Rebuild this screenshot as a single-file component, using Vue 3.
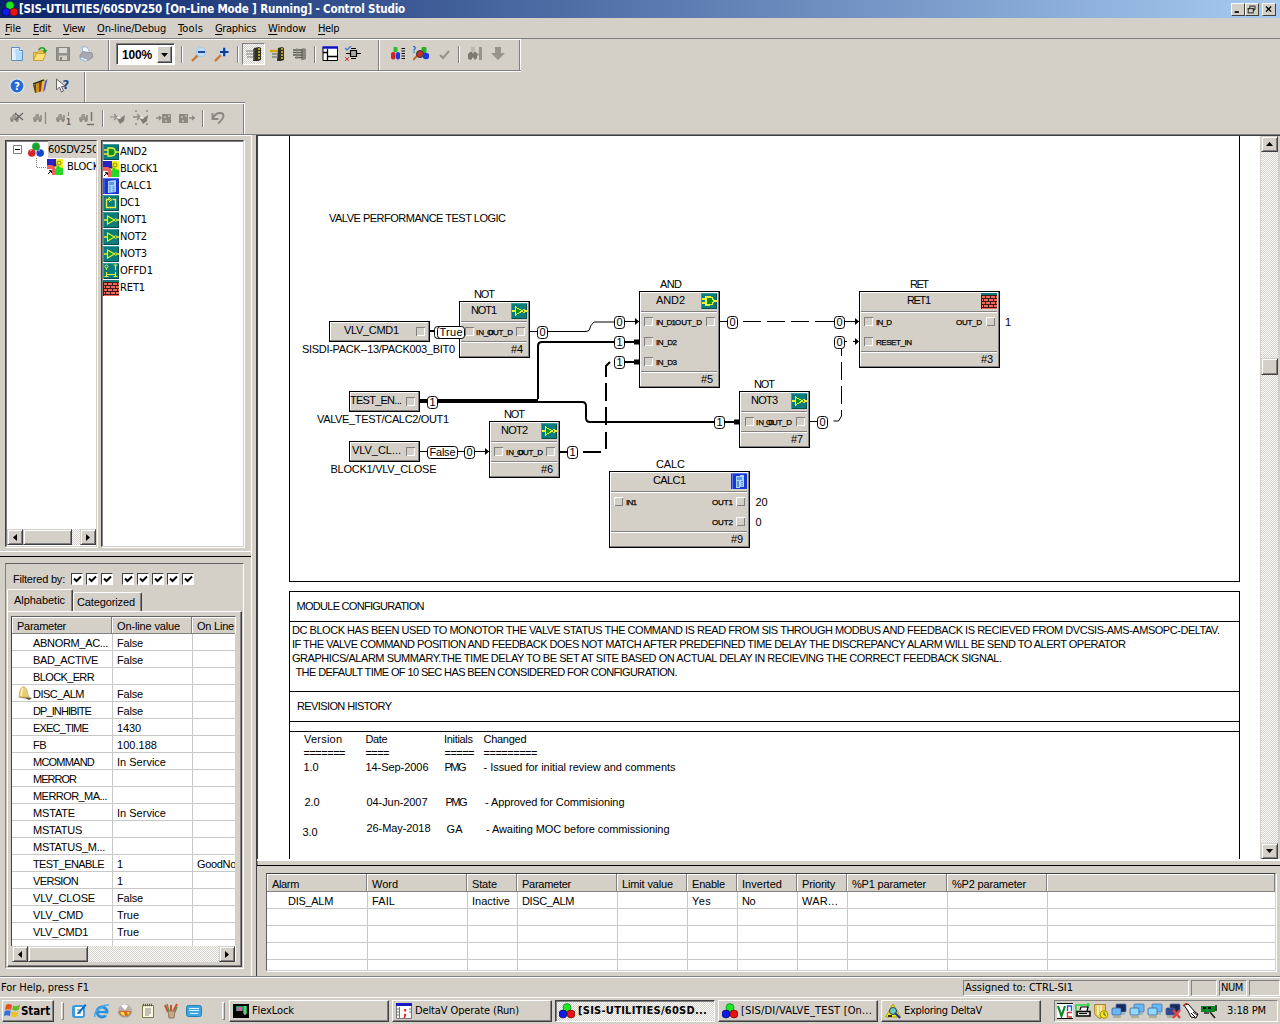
<script setup>
import { h } from 'vue'

// Spreads the letters of an element so that it takes the given width.
const vFit = {
  mounted(el, { value }) {
    const n = el.textContent.length
    const w = el.getBoundingClientRect().width
    if (value && n) el.style.letterSpacing = (value - w) / n + 'px'
  }
}

const rgb = '<circle cx="8" cy="4.6" r="4" fill="#1ee81e" stroke="#063" stroke-width=".6"/><circle cx="4" cy="11" r="4" fill="#0a1af0" stroke="#003" stroke-width=".6"/><circle cx="12" cy="11" r="4" fill="#ee1010" stroke="#500" stroke-width=".6"/>'
const teal = '<rect width="16" height="16" fill="#087c7c"/><path d="M0 15.5H16M15.5 0V16" stroke="#045050"/><path d="M0 .5H16M.5 0V16" stroke="#3a9c9c"/>'
const loco = '<path d="M1 9V7.500l2-1L4 4h3v2.500h1V5h2v5H1z" fill="#9c9892"/><circle cx="3" cy="10.500" r="1.500" fill="#8c8882"/><circle cx="8" cy="10.500" r="1.500" fill="#8c8882"/>'
const mon = (a, b) => `<rect x="5" y="1" width="10" height="8" rx="1" fill="${a}" stroke="#4a6fa8" stroke-width=".8"/><path d="M8 10h6v2H8z" fill="#9bb"/><rect x="1" y="5" width="9" height="7" rx="1" fill="${b}" stroke="#3a5f98" stroke-width=".8"/><path d="M2 13h8v2H2z" fill="#b0b098"/>`
const icons = {
  rgb,
  module: '<circle cx="8" cy="4.5" r="4" fill="#2db83d"/><path d="M5 3l3-2 3 2v4l-3 1-3-1z" fill="#16a030"/><circle cx="3.8" cy="11" r="3.8" fill="#d02828"/><circle cx="12.2" cy="11" r="3.8" fill="#1848c8"/><path d="M2 9l2-1M10 9l2-1" stroke="#fff" stroke-opacity=".6"/>',
  and: teal + '<path d="M5 4h3.5c5 0 5 8 0 8H5zM1 6h4M1 10h4M12 8h4" fill="#0a9020" stroke="#e8f040" stroke-width="1.3"/>',
  not: teal + '<path d="M4.5 4v8l7-4z" fill="#0a9020" stroke="#e8f040" stroke-width="1.1"/><path d="M1 8h3.5M14 8h2" stroke="#e8f040" stroke-width="1.3"/><circle cx="12.7" cy="8" r="1.3" fill="#087c7c" stroke="#e8f040" stroke-width=".9"/>',
  block: '<rect width="16" height="16" fill="#f5ee20"/><path d="M0 0h9v5l-2 2H0z" fill="#2a20c8"/><path d="M0 6h5l3 2v8H0z" fill="#f06060"/><path d="M8 10l3-2 5 1v7H8z" fill="#28d828"/><circle cx="12" cy="4" r="2" fill="#e8f010" stroke="#7a7a10" stroke-width=".8"/><circle cx="8" cy="6" r="1.6" fill="#302080"/><circle cx="11" cy="8" r="1.6" fill="#28d828"/><path d="M0 10h5v6H0z" fill="#fff"/><path d="M1 15l3-3M2 11.7h2.5V14" stroke="#000" fill="none"/>',
  calc: '<rect width="16" height="16" fill="#1c34d0"/><path d="M0 .5h16M1 0v16" stroke="#5878f0"/><path d="M5 3l8-1v12l-8 1z" fill="#a8d4f8"/><path d="M6 4.3l5-.5v3l-5 .5z" fill="#5898e8"/><path d="M6 9h2M9.5 8.8h2M6 11h2M9.5 10.8h2M6 13h2M9.5 12.8h2" stroke="#5888e0" stroke-width="1.2"/>',
  dc: teal + '<path d="M6 4.500H3.500v8h9v-8H9.500" fill="none" stroke="#e8f040" stroke-width="1.3"/><path d="M6 2v2.500l2.500 1M6 7l2.500-2.500L6 2" fill="none" stroke="#e8f040"/>',
  offd: teal + '<circle cx="3.500" cy="3.500" r="1.500" fill="none" stroke="#e8f040"/><path d="M3.500 5v2M10.500 2h4M12.500 2v5M3.500 9v5M12.500 9v5M3.500 11.500h9M1.500 13.500h4M10.500 13.500h4" fill="none" stroke="#e8f040" stroke-width="1.1"/>',
  ret: '<rect width="16" height="16" fill="#ee6a5c"/><path d="M0 1h16" stroke="#087c7c" stroke-width="2.400"/><path d="M0 5.500h16M0 8.500h16M0 11.500h16M0 14.500h16M4.500 3v3M9.500 3v3M14.500 3v3M2.500 6v3M7.500 6v3M12.500 6v3M4.500 9v3M9.500 9v3M14.500 9v3M2.500 12v3M7.500 12v3M12.500 12v3M.5 2v14" stroke="#401818" stroke-width="1" shape-rendering="crispEdges"/><path d="M0 2.500h16" stroke="#401818"/>',
  new: '<path d="M2.500 1.500h8l3 3v10h-11z" fill="#dff0ff" stroke="#5a8fc8"/><path d="M6 3h4v3h3v8H7z" fill="#b4dcfa"/><path d="M10.500 1.500v3h3" fill="#fff" stroke="#5a8fc8"/>',
  open: '<path d="M1.500 14.500V6.500h4l1-1.500h5v3" fill="#f0c848" stroke="#c89c38"/><path d="M1.500 14.500l3-7h9.500l-3 7z" fill="#fae078" stroke="#c8a038"/><path d="M7 4c1-3 5-3 6 0" fill="none" stroke="#28a028" stroke-width="1.700"/><path d="M10.500 4h5L13 7.500z" fill="#28a028"/>',
  save: '<path d="M1.500 1.500h13v13h-13z" fill="#94928c" stroke="#86847e"/><path d="M4 2h8v5H4z" fill="#dcdad4"/><path d="M4 9.500h8V14H4z" fill="#d4d0c8"/><path d="M5 11h2v3H5z" fill="#86847e"/>',
  print: '<path d="M5 7L4 1l5 0 3 6z" fill="#f4faff" stroke="#9ab8d8"/><path d="M2 9l3-3.500 9 1.500 1 4-5 3.500-8-2.500z" fill="#a8aab0" stroke="#888a90" stroke-width=".8"/><path d="M3 11l7 2.500-2 2-6-2.500z" fill="#dcecfa" stroke="#8ac" stroke-width=".8"/>',
  zout: '<path d="M1 15l6-6" stroke="#c87838" stroke-width="2.400"/><circle cx="10" cy="6" r="4.800" fill="#b8dcfa" stroke="#a8c8e8"/><path d="M7 6h7" stroke="#103890" stroke-width="1.800"/>',
  zin: '<path d="M1 15l6-6" stroke="#c87838" stroke-width="2.400"/><circle cx="10.200" cy="6" r="4.500" fill="#b8dcfa"/><path d="M6 6h8.500M10.200 1.800v8.500" stroke="#103890" stroke-width="2.200"/>',
  bk1: '<path d="M8 2l5-1 2 1v12l-3 1H7z" fill="#303028"/><path d="M13 2v12" stroke="#e0c818" stroke-width="1.500" stroke-dasharray="2 1"/><path d="M0 5h8M0 8h8M1 11h7" stroke="#a0a098" stroke-width="1.500"/><path d="M7 3h1.500v11H7z" fill="#606058"/>',
  bk2: '<path d="M9 2l4-1 2 1v12l-3 1H8z" fill="#303028"/><path d="M13 2v12" stroke="#e0c818" stroke-width="1.500" stroke-dasharray="2 1"/><path d="M1 5h8" stroke="#d0a810" stroke-width="2.500"/><path d="M3 8h6M3 11h6" stroke="#808078" stroke-width="1.400"/>',
  bk3: '<path d="M9 3l3-1 2 1v10l-2 1H9z" fill="#888880"/><path d="M1 4h10M1 6.500h10M1 9h10M3 11.500h8" stroke="#606058" stroke-width="1.300"/><path d="M5 2v11" stroke="#888880"/>',
  layout: '<path d="M1 1.500h14.500v13H1z" fill="#fff" stroke="#000"/><path d="M.5 1.500H16" stroke="#1010c8" stroke-width="2.500"/><path d="M5.500 3v11.500M5.500 10.500H15M1 6.500h4.500" stroke="#000" stroke-width="1.300"/>',
  pins: '<path d="M0 2l2 2 4-4" fill="none" stroke="#2878d0" stroke-width="1.200"/><path d="M0 11l4 4m0-4l-4 4" stroke="#d83028"/><path d="M5.500 4.500h6v6h-6z" fill="#aaa8a0" stroke="#000" stroke-width="1.200"/><path d="M1 7.500h4.500M11.500 7.500H16M6 2.500h5M6 12.500h5" stroke="#000" stroke-width="1.200"/>',
  list: '<rect x="3.500" y="1" width="4" height="5" rx="1" fill="#28c028"/><rect x="1" y="6" width="4.500" height="7.500" rx="2" fill="#d82020"/><rect x="6" y="6" width="4" height="7.500" rx="2" fill="#1838d8"/><path d="M11.500 2.500H15M11.500 5H15M11.500 7.500H15M11.500 10H15M11.500 12.500H15" stroke="#000" stroke-width="1.200"/>',
  search: '<text x="-1" y="7" font-size="8" font-weight="bold" fill="#2878d0">?</text><path d="M0 14l5-5" stroke="#c07020" stroke-width="2"/><rect x="8.500" y="1" width="5" height="6" rx="1" fill="#28b028"/><circle cx="7" cy="8" r="3.500" fill="#c83030" stroke="#333"/><circle cx="13" cy="10" r="3.300" fill="#1838d8"/>',
  check: '<path d="M4 9l3 3 6-7" fill="none" stroke="#98948c" stroke-width="2"/>',
  loc: '<rect x="4" y="1" width="4" height="5" fill="#bbb7b0"/><path d="M1 8l2-2h2l1 2 1-2h2l1 2v4l-2 2-2-3-2 3-3-1z" fill="#7c7872"/><path d="M10 7l2 1V1h3v13h-3V9l-2 1z" fill="#98948c"/>',
  down: '<path d="M5 1h6v6h4l-7 7-7-7h4z" fill="#98948c"/>',
  help: '<circle cx="8" cy="8" r="7" fill="#2868d0" stroke="#d8ecff" stroke-width="1.200"/><text x="8" y="12" font-size="11" font-weight="bold" fill="#fff" text-anchor="middle">?</text>',
  books: '<path d="M1 7l3-1 2 8-3 1z" fill="#604818"/><path d="M4 5l3-1v10l-3 1z" fill="#c89018"/><path d="M7 4l3-2v11l-3 1z" fill="#983818"/><path d="M10 3l3-2-1 12-3 1z" fill="#e8c838"/><path d="M13 3l2.500-2L13 12l-2 2z" fill="#5858c8"/><path d="M1 6l11-4" stroke="#30381c" stroke-width="1.500"/>',
  whats: '<path d="M1.500 1v11l3-3 2 5 2-1-2-4.500h4z" fill="#f4f4f4" stroke="#666"/><text x="7.500" y="11" font-size="13" font-weight="bold" fill="#184890">?</text>',
  d1: loco + '<path d="M6 3l8 7m0-7l-8 7" stroke="#666" stroke-width="1.200"/>',
  d2: loco + '<path d="M13.500 2v12" stroke="#8c8882" stroke-width="1.300"/>',
  d3: loco + '<path d="M13.500 2v4" stroke="#8c8882"/><text x="11" y="15" font-size="8" font-weight="bold" fill="#666">1</text>',
  d4: loco + '<path d="M13.500 2v9M9 14.500h7" stroke="#77736d" stroke-width="1.500"/>',
  h1: '<path d="M0 7h6M4 4l3 3-3 3" stroke="#8c8882" fill="none" stroke-width="1.200"/><path d="M6 7l3 2 6-4-1 6-4 3z" fill="#807c76"/><path d="M6 8l3-2 2 3z" fill="#eee"/>',
  h2: '<path d="M0 7h6M2 1h2M13 1h2M2 14h2M13 14h2M4 4l3 3-3 3" stroke="#8c8882" fill="none" stroke-width="1.300"/><path d="M6 7l3 2 6-4-1 6-4 3z" fill="#807c76"/><path d="M6 8l3-2 2 3z" fill="#eee"/>',
  h3: '<path d="M0 8h5M3 6l2 2-2 2" stroke="#8c8882" fill="none" stroke-width="1.300"/><path d="M6 4h9v9H6z" fill="#8c8882"/><path d="M8 7h2M12 6h2M9 11h2" stroke="#c4c0b8" stroke-width="1.400"/>',
  h4: '<path d="M10 8h6M13 6l2 2-2 2" stroke="#8c8882" fill="none" stroke-width="1.300"/><path d="M0 4h9v9H0z" fill="#8c8882"/><path d="M2 7h2M6 6h2M3 11h2" stroke="#c4c0b8" stroke-width="1.400"/>',
  undo: '<path d="M2.500 3v6h6M3 8.500C6 1.500 13 2 13.500 5.500c0 3-2 5-5.500 8" fill="none" stroke="#8c8882" stroke-width="1.900"/>',
  flag: '<path d="M2 2c2-1.500 4-1 6 0L7 7C5 6 3 6 1 7z" fill="#e85020"/><path d="M9 2.500c2 1 4 1 7-1l-1 5c-3 2-5 1-7 0z" fill="#68b830"/><path d="M.8 8c2-1 4-1 6 0l-1 5c-2-1-4-1-6 0z" fill="#3870d8"/><path d="M8 8.500c2 1 4 1 6.500-.5l-1 5c-2 1.500-4 1.500-6.500.5z" fill="#f0c020"/>',
  desk: '<rect x="1" y="2" width="13" height="13" rx="3" fill="#3c9be0"/><path d="M4 4h8v9H4z" fill="#fff"/><path d="M6 7h4M6 10h4" stroke="#3c80c0"/><path d="M7 9l7-8 1.500 1.500-7 8-2 .5z" fill="#1868b8"/>',
  ie: '<circle cx="8" cy="9" r="5" fill="none" stroke="#2890e0" stroke-width="3"/><path d="M4 9h9" stroke="#2890e0" stroke-width="2.200"/><path d="M11 10.500h5v2h-5z" fill="#d4d0c8"/><path d="M1 14C-1 10 8 1 15 2" fill="none" stroke="#4aa8e8" stroke-width="1.500"/>',
  ball: '<circle cx="8" cy="8" r="7" fill="#b8b0a8"/><path d="M2 8h12c0 8-12 8-12 0z" fill="#d86818"/><path d="M4 3c2-2 5-2 7 0l-3 4z" fill="#fff"/><path d="M3 9h4l1 4-3-1zM10 9h3l-2 3z" fill="#fae060"/><path d="M1 9c2 6 12 6 14 0" fill="none" stroke="#a0a0a0" stroke-width="1"/>',
  pad: '<path d="M2.500 2.500h11v12h-11z" fill="#fcf8e0" stroke="#807850"/><path d="M3 2h10" stroke="#555" stroke-width="2.500" stroke-dasharray="1 1"/><path d="M5 6h6M5 8h6M5 10h6M5 12h4" stroke="#888"/>',
  pens: '<path d="M5 9L2 2M8 9V2M10 9l4-8" stroke="#d84830" stroke-width="2"/><path d="M6 8L4 1M12 9l2-5" stroke="#48a048" stroke-width="1.500"/><path d="M5 8h7l-1 7H6z" fill="#c8a888" stroke="#907858"/>',
  kbd: '<rect x=".5" y="2.500" width="15" height="11" rx="2" fill="#40a4e0" stroke="#2480b8"/><path d="M3 5.500h10M3 7.500h10M4 10.500h8" stroke="#e0f4ff"/>',
  flex: '<path d="M0 1h16v14H0z" fill="#000"/><path d="M3 3h11v8H3z" fill="#18a048"/><path d="M4 4h5v4H4z" fill="#e050c0"/><path d="M1 8h9v7H1z" fill="#000"/><path d="M12 3v9" stroke="#c8e8c8"/>',
  operate: '<path d="M.5 .5h15v15H.5z" fill="#fff" stroke="#777"/><path d="M0 1.500h16" stroke="#1818c0" stroke-width="3"/><path d="M3.500 4v12M1 6h3M1 9h3M1 12h3M13 6h2M13 9h2" stroke="#777"/><text x="7" y="13" font-size="12" font-weight="bold" fill="#e01818">;</text>',
  explore: '<path d="M8 1l7.500 13H.5z" fill="#f0e820" stroke="#b0a000"/><circle cx="8" cy="8" r="3.500" fill="#70c8c8" stroke="#245"/><path d="M10 10l5 5" stroke="#1838a0" stroke-width="2"/><path d="M3 13h4" stroke="#333" stroke-width="2"/>',
  vnc: '<rect width="16" height="16" fill="#fff"/><path d="M0 .5h16M0 15.500h16" stroke="#000"/><path d="M1 3l3.500 10L8 3" fill="none" stroke="#108828" stroke-width="2.200"/><path d="M10.500 8V3h4v5" fill="none" stroke="#2858d8" stroke-width="1.400"/><path d="M15 9.500h-4.500V14H15" fill="none" stroke="#d83838" stroke-width="1.400"/>',
  prn: '<path d="M1 14V2h14M13 0v5" fill="none" stroke="#20d840" stroke-width="1.600"/><path d="M5 7l1-3h7l-1 4" fill="#fff" stroke="#000" stroke-width="1.200"/><path d="M2 8.500h13V13H2z" fill="#ddd" stroke="#000" stroke-width="1.500"/><path d="M4 10.500h8" stroke="#000"/>',
  shield: '<path d="M1.500 1.500h11v8c0 3-3 4.500-5.500 6-2.500-1.500-5.500-3-5.500-6z" fill="#e8c860" stroke="#a08838"/><path d="M5 2v10M8 2v10" stroke="#fff4c0" stroke-width="1.500"/><circle cx="11" cy="11.500" r="3.800" fill="#f4e818" stroke="#a09000"/><path d="M11 9v3h2" stroke="#555" fill="none"/>',
  net1: mon('#182858', '#68b8f8'),
  net2: mon('#68b8f8', '#90d8fc'),
  netx: mon('#182858', '#304890') + '<path d="M8 7l7 8m0-8l-7 8" stroke="#e84040" stroke-width="2.400"/>',
  hand: '<path d="M1 2l4-1 7 8 3 2-2 4-5-1-3-6z" fill="#fff" stroke="#000"/><path d="M0 3l4-3" stroke="#d82020" stroke-width="1.500"/><path d="M8 10l4 4M10 9l4 3" stroke="#000"/>',
  card: '<path d="M0 3h14v6H0z" fill="#088820"/><path d="M2 5h3M7 5h3" stroke="#000" stroke-width="2"/><path d="M3 10h5M15 2v6M9 9l5 6" stroke="#222" stroke-width="1.600"/>',
  bell: '<path d="M3 12C4 9 3 3 7.500 1.500 12 3 11 9 13 12z" fill="#ecd070" stroke="#c0a050" stroke-width=".7"/><path d="M5 11c1-3 0-6 2-8" stroke="#fff8d0" stroke-width="1.500" fill="none"/><path d="M1 12.500h12l3 .5-3 2-3-1.500z" fill="#605020"/>'
}
const Ico = (p) => h('svg', { class: 'ico', viewBox: '0 0 16 16', width: p.s || 16, height: p.s || 16, x: p.x, y: p.y, innerHTML: icons[p.n] })
Ico.props = ['n', 's', 'x', 'y']

const menus = [['File', 16, 5], ['Edit', 18, 33], ['View', 22, 63], ['On-line/Debug', 69, 97], ['Tools', 25, 178], ['Graphics', 41, 215], ['Window', 38, 268], ['Help', 21, 318]]
  .map(([t, w, x], i, a) => ({ t, w, gap: i ? x - a[i - 1][2] - a[i - 1][1] : x }))

const blocks = [['and', 'AND2', 27], ['block', 'BLOCK1', 38], ['calc', 'CALC1', 32], ['dc', 'DC1', 20], ['not', 'NOT1', 27], ['not', 'NOT2', 27], ['not', 'NOT3', 27], ['offd', 'OFFD1', 33], ['ret', 'RET1', 25]]

const params = [
  ['ABNORM_AC...', 75, 'False', 26], ['BAD_ACTIVE', 65, 'False', 26], ['BLOCK_ERR', 61, '', 0], ['DISC_ALM', 51, 'False', 26],
  ['DP_INHIBITE', 58, 'False', 26], ['EXEC_TIME', 55, '1430', 24], ['FB', 13, '100.188', 40], ['MCOMMAND', 61, 'In Service', 49],
  ['MERROR', 43, '', 0], ['MERROR_MA...', 74, '', 0], ['MSTATE', 42, 'In Service', 49], ['MSTATUS', 49, '', 0], ['MSTATUS_M...', 72, '', 0],
  ['TEST_ENABLE', 71, '1', 5], ['VERSION', 45, '1', 5], ['VLV_CLOSE', 62, 'False', 26], ['VLV_CMD', 50, 'True', 22], ['VLV_CMD1', 55, 'True', 22]
]

const cols = [
  ['Alarm', 100, 27, 'DIS_ALM', 45, 20], ['Word', 100, 26, 'FAIL', 23, 4], ['State', 50, 25, 'Inactive', 38, 4], ['Parameter', 100, 49, 'DISC_ALM', 52, 4],
  ['Limit value', 70, 51, '', 0, 4], ['Enable', 50, 33, 'Yes', 19, 4], ['Inverted', 60, 40, 'No', 13, 4], ['Priority', 50, 33, 'WAR...', 36, 4],
  ['%P1 parameter', 100, 74, '', 0, 4], ['%P2 parameter', 100, 74, '', 0, 4]
]

const fbs = [
  { x: 459, y: 301, w: 70, h: 56, i: 'not', top: ['NOT', 474, 21], name: ['NOT1', 471, 26], num: '#4' },
  { x: 639, y: 291, w: 80, h: 96, i: 'and', top: ['AND', 660, 22], name: ['AND2', 656, 29], num: '#5' },
  { x: 859, y: 291, w: 140, h: 76, i: 'ret', top: ['RET', 910, 19], name: ['RET1', 907, 24], num: '#3' },
  { x: 739, y: 391, w: 70, h: 56, i: 'not', top: ['NOT', 754, 21], name: ['NOT3', 751, 27], num: '#7' },
  { x: 489, y: 421, w: 70, h: 56, i: 'not', top: ['NOT', 504, 21], name: ['NOT2', 501, 27], num: '#6' },
  { x: 609, y: 471, w: 140, h: 76, i: 'calc', top: ['CALC', 656, 29], name: ['CALC1', 653, 33], num: '#9' }
]
const refs = [{ x: 329, y: 321, w: 100 }, { x: 349, y: 391, w: 70 }, { x: 349, y: 441, w: 70 }]
// x, y, raised
const ports = [
  [416, 327], [406, 397], [406, 447], [465, 327], [516, 327], [644, 317], [706, 317], [644, 337], [644, 357], [864, 317], [864, 337], [986, 317, 1],
  [745, 417], [796, 417], [494, 447], [546, 447], [614, 497, 1], [736, 497, 1], [736, 517, 1]
]
const pins = [
  ['IN_D', 476, 335, 18], ['OUT_D', 487, 335, 26], ['IN_D1', 656, 325, 20], ['OUT_D', 675, 325, 27], ['IN_D2', 656, 345, 21], ['IN_D3', 656, 365, 21],
  ['IN_D', 876, 325, 16], ['RESET_IN', 876, 345, 36], ['OUT_D', 956, 325, 26], ['IN_D', 756, 425, 18], ['OUT_D', 766, 425, 26],
  ['IN_D', 506, 455, 18], ['OUT_D', 517, 455, 26], ['IN1', 626, 505, 11], ['OUT1', 712, 505, 21], ['OUT2', 712, 525, 21]
]
// text, left, top, width
const pills = [
  ['', 434, 326, 8], ['True', 437, 326, 27], ['0', 537, 326, 10], ['0', 614, 316, 10], ['1', 614, 336, 10], ['1', 614, 356, 10], ['0', 727, 316, 10], ['0', 834, 316, 10], ['0', 834, 336, 10],
  ['1', 427, 396, 10], ['1', 714, 416, 10], ['0', 817, 416, 10], ['False', 427, 446, 30], ['0', 464, 446, 10], ['1', 567, 446, 10]
]
const labels = [
  ['VALVE PERFORMANCE TEST LOGIC', 329, 222, 177], ['VLV_CMD1', 344, 334, 55], ['SISDI-PACK--13/PACK003_BIT0', 302, 353, 153],
  ['TEST_EN...', 350, 404, 52], ['VALVE_TEST/CALC2/OUT1', 317, 423, 132], ['VLV_CL...', 352, 454, 49], ['BLOCK1/VLV_CLOSE', 330.5, 473, 106],
  ['20', 755.5, 506, 12], ['0', 755.5, 526, 6], ['1', 1005, 326, 6],
  ['MODULE CONFIGURATION', 296.500, 610, 128],
  ['DC BLOCK HAS BEEN USED TO MONOTOR THE VALVE STATUS THE COMMAND IS READ FROM SIS THROUGH MODBUS AND FEEDBACK IS RECIEVED FROM DVCSIS-AMS-AMSOPC-DELTAV.', 292, 634, 928],
  ['IF THE VALVE COMMAND POSITION AND FEEDBACK DOES NOT MATCH AFTER PREDEFINED TIME DELAY THE DISCREPANCY ALARM WILL BE SEND TO ALERT OPERATOR', 292, 648, 834],
  ['GRAPHICS/ALARM SUMMARY.THE TIME DELAY TO BE SET AT SITE BASED ON ACTUAL DELAY IN RECIEVING THE CORRECT FEEDBACK SIGNAL.', 292, 662, 710],
  ['THE DEFAULT TIME OF 10 SEC HAS BEEN CONSIDERED FOR CONFIGURATION.', 295.5, 676, 382],
  ['REVISION HISTORY', 297, 710, 95],
  ['Version', 304, 743, 38], ['Date', 365.5, 743, 22], ['Initials', 444, 743, 29], ['Changed', 483.5, 743, 43],
  ['=======', 303.500, 757, 42], ['====', 365.500, 757, 24], ['=====', 444.500, 757, 30], ['=========', 483.500, 757, 54],
  ['1.0', 303.500, 771, 15], ['14-Sep-2006', 365.500, 771, 63], ['PMG', 444.500, 771, 22], ['- Issued for initial review and comments', 483.500, 771, 192],
  ['2.0', 304.500, 806, 15], ['04-Jun-2007', 366.500, 806, 61], ['PMG', 445.500, 806, 22], ['- Approved for Commisioning', 485, 806, 139.5],
  ['3.0', 302.500, 836, 15], ['26-May-2018', 366.500, 832, 64], ['GA', 446.500, 833, 16], ['- Awaiting MOC before commissioning', 486, 833, 183.5]
]
const tasks = [
  ['flex', 'FlexLock', 42], ['operate', 'DeltaV Operate (Run)', 104], ['rgb', '[SIS-UTILITIES/60SD...', 129, 1], ['rgb', '[SIS/DI/VALVE_TEST [On...', 131], ['explore', 'Exploring DeltaV', 78]
]
const quick = ['desk', 'ie', 'ball', 'pad', 'pens', 'kbd']
const tray = ['vnc', 'prn', 'shield', 'net1', 'net2', 'net2', 'netx', 'hand', 'card']
</script>

<template>
  <div class="screen">
    <header class="title">
      <Ico n="rgb" />
      <b v-fit="386">[SIS-UTILITIES/60SDV250 [On-Line Mode ] Running] - Control Studio</b>
      <div class="wbtns">
        <svg class="wb" viewBox="0 0 14 13"><path d="M3 9.500h5" stroke="#000" stroke-width="2" /></svg>
        <svg class="wb" viewBox="0 0 14 13"><path d="M5 2.500h5M4.500 2v3M10.500 2v5h-2M2.500 5v5M8.500 5v5M2 5.500h7M2 10.500h7" stroke="#000" fill="none" /></svg>
        <svg class="wb last" viewBox="0 0 14 13"><path d="M3.500 3l6 6m0-6l-6 6" stroke="#000" stroke-width="1.600" /></svg>
      </div>
    </header>
    <nav class="menu">
      <span v-for="m in menus" :key="m.t" v-fit="m.w" :style="{ marginLeft: m.gap + 'px' }"><u>{{ m.t[0] }}</u>{{ m.t.slice(1) }}</span>
    </nav>
    <section class="bars">
      <div class="bar bar1">
        <i v-for="n in ['new', 'open', 'save', 'print']" :key="n" class="cell"><Ico :n="n" /></i>
        <s class="edge e1"></s>
        <div class="combo"><b v-fit="30">100%</b><em><svg width="7" height="4"><path d="M0 0h7L3.500 4z" /></svg></em></div>
        <s class="sep s1"></s>
        <i v-for="n in ['zout', 'zin']" :key="n" class="cell"><Ico :n="n" /></i>
        <s class="sep s2"></s>
        <i v-for="n in ['bk1', 'bk2', 'bk3']" :key="n" class="cell" :class="{ on: n === 'bk1' }"><Ico :n="n" /></i>
        <s class="sep s3"></s>
        <i v-for="n in ['layout', 'pins']" :key="n" class="cell"><Ico :n="n" /></i>
        <s class="edge e2"></s>
        <i v-for="n in ['list', 'search', 'check']" :key="n" class="cell"><Ico :n="n" /></i>
        <s class="sep s4"></s>
        <i v-for="n in ['loc', 'down']" :key="n" class="cell"><Ico :n="n" /></i>
        <s class="edge e3"></s>
      </div>
      <div class="bar bar2">
        <i v-for="n in ['help', 'books', 'whats']" :key="n" class="cell"><Ico :n="n" /></i>
        <s class="edge e4"></s>
      </div>
      <div class="bar bar3">
        <i v-for="n in ['d1', 'd2', 'd3', 'd4']" :key="n" class="cell"><Ico :n="n" /></i>
        <s class="sep s5"></s>
        <i v-for="n in ['h1', 'h2', 'h3', 'h4']" :key="n" class="cell"><Ico :n="n" /></i>
        <s class="sep s6"></s>
        <i class="cell"><Ico n="undo" /></i>
        <s class="edge e5"></s>
      </div>
    </section>

    <main class="work">
      <aside class="left">
        <div class="upper">
          <div class="tree sunk">
            <div class="node root">
              <svg width="9" height="9"><path d="M.5 .5h8v8h-8z" fill="#fff" stroke="#808080" /><path d="M2 4.500h5" stroke="#000" /></svg>
              <Ico n="module" /><span class="sel"><span v-fit="50">60SDV250</span></span>
            </div>
            <div class="node child">
              <svg width="11" height="17"><path d="M.5 0v9.500H11" fill="none" stroke="#808080" stroke-dasharray="1 1" /></svg>
              <Ico n="block" /><span v-fit="38">BLOCK1</span>
            </div>
            <div class="fill"></div>
            <div class="hs"><i class="ab"><svg width="4" height="7"><path d="M4 0v7L0 3.500z" /></svg></i><i class="th t1"></i><s></s><i class="ab"><svg width="4" height="7"><path d="M0 0v7l4-3.500z" /></svg></i></div>
          </div>
          <div class="blist sunk">
            <div v-for="b in blocks" :key="b[1]" class="brow"><Ico :n="b[0]" /><span v-fit="b[2]">{{ b[1] }}</span></div>
          </div>
        </div>
        <div class="lower">
          <div class="filter">
            <span v-fit="52" class="flab">Filtered by:</span>
            <i v-for="n in 8" :key="n" class="cb" :class="{ far: n === 4 }"><svg width="9" height="9"><path d="M1 3.500l2.500 2.500L8 1.500" fill="none" stroke="#000" stroke-width="2" /></svg></i>
          </div>
          <div class="tabs"><div class="tab act"><span v-fit="51">Alphabetic</span></div><div class="tab"><span v-fit="58">Categorized</span></div></div>
          <div class="page">
            <div class="plist">
              <div class="ph"><div class="p1"><span v-fit="49">Parameter</span></div><div class="p2"><span v-fit="63">On-line value</span></div><div class="p3"><span v-fit="37">On Line</span></div></div>
              <div class="prows">
                <div v-for="p in params" :key="p[0]" class="pr">
                  <div class="p1"><Ico v-if="p[0] === 'DISC_ALM'" n="bell" class="bell" /><span v-fit="p[1]">{{ p[0] }}</span></div>
                  <div class="p2"><span v-fit="p[3]">{{ p[2] }}</span></div>
                  <div class="p3"><span v-if="p[0] === 'TEST_ENABLE'" v-fit="39">GoodNo</span></div>
                </div>
                <div class="pr"><div class="p1"></div><div class="p2"></div><div class="p3"></div></div>
              </div>
              <div class="hs"><i class="ab"><svg width="4" height="7"><path d="M4 0v7L0 3.500z" /></svg></i><i class="th t2"></i><s></s><i class="ab"><svg width="4" height="7"><path d="M0 0v7l4-3.500z" /></svg></i></div>
            </div>
          </div>
        </div>
      </aside>

      <div class="right">
        <div class="view">
          <svg class="canvas" width="1002" height="723" viewBox="258 136 1002 723">
            <g fill="none" stroke="#000" shape-rendering="crispEdges">
              <path d="M289.500 136V581.500H1239.500V136M289.500 859V591.500H1239.500V859M289.500 621.500H1239.500M289.500 691.500H1239.500M289.500 721.500H1239.500M289.500 731.500H1239.500" />
            </g>
            <g fill="none" stroke="#000">
              <path d="M530 331.500h7M548 331.500h38l3-1 2-5 3-3.500H614M624 321.500h15M720 321.500h7M743 321.500h18M767 321.500h18M791 321.500h18M815 321.500h19M844 321.500h15M845 341.500h2M853 341.500h5M841.500 348v8M841.500 362v18M841.500 386v18M841.500 410v6l-3 5h-5M810 421.500h7M420 451.500h8M457 451.500h7M474 451.500h15" />
              <path stroke-width="2" d="M430 331h4M538 399V346q0-4 4-4H614M624 342h15M420 402H582q4 0 4 4v12q0 4 4 4H714M724 422h15M560 452h7M583 452h18M606 449v-17M606 425v-18M606 401v-18M606 377v-11l4-4M624 362h15" />
              <path stroke-width="3" d="M420 400.500H538" />
            </g>
            <path d="M635 318l4 3.500-4 3.500zM855 318l4 3.500-4 3.500zM855 338l4 3.500-4 3.500zM485 448l4 3.500-4 3.500zM634 339.500h5v5h-5zM634 359.500h5v5h-5zM734 419.500h5v5h-5z" />
            <g v-for="b in fbs" :key="b.num" shape-rendering="crispEdges">
              <rect :x="b.x" :y="b.y" :width="b.w + 1" :height="b.h + 1" fill="#000" />
              <rect :x="b.x + 1" :y="b.y + 1" :width="b.w - 1" :height="b.h - 1" fill="#808080" />
              <rect :x="b.x + 1" :y="b.y + 1" :width="b.w - 2" :height="b.h - 2" fill="#fff" />
              <rect :x="b.x + 2" :y="b.y + 2" :width="b.w - 3" :height="b.h - 3" fill="#d4d0c8" />
              <path :d="`M${b.x + 2} ${b.y + 20.5}h${b.w - 4}M${b.x + 2} ${b.y + b.h - 15.5}h${b.w - 4}`" stroke="#808080" />
              <path :d="`M${b.x + 2} ${b.y + 21.5}h${b.w - 4}M${b.x + 2} ${b.y + b.h - 14.5}h${b.w - 4}`" stroke="#fff" />
              <Ico :n="b.i" :x="b.x + b.w - 18" :y="b.y + 2" />
              <text :x="b.top[1]" :y="b.y - 3" :textLength="b.top[2]">{{ b.top[0] }}</text>
              <text :x="b.name[1]" :y="b.y + 13" :textLength="b.name[2]">{{ b.name[0] }}</text>
              <text :x="b.x + b.w - 18" :y="b.y + b.h - 4" textLength="12">{{ b.num }}</text>
            </g>
            <g v-for="r in refs" :key="r.y" shape-rendering="crispEdges">
              <rect :x="r.x" :y="r.y" :width="r.w + 1" height="21" fill="#000" />
              <rect :x="r.x + 1" :y="r.y + 1" :width="r.w - 1" height="19" fill="#808080" />
              <rect :x="r.x + 1" :y="r.y + 1" :width="r.w - 2" height="18" fill="#fff" />
              <rect :x="r.x + 2" :y="r.y + 2" :width="r.w - 3" height="17" fill="#d4d0c8" />
            </g>
            <g v-for="(p, i) in ports" :key="i" fill="none" shape-rendering="crispEdges">
              <path :d="`M${p[0] + .5} ${p[1] + 9}v-8.500h8.500`" :stroke="p[2] ? '#fff' : '#808080'" />
              <path :d="`M${p[0] + 1} ${p[1] + 8.500}h7.500v-7.500`" :stroke="p[2] ? '#808080' : '#fff'" />
            </g>
            <text v-for="(p, i) in pins" :key="i" class="pin" :x="p[1]" :y="p[2]" :textLength="p[3]">{{ p[0] }}</text>
            <g v-for="(p, i) in pills" :key="i">
              <rect :x="p[1] + .5" :y="p[2] + .5" :width="p[3]" height="12" rx="3" fill="#fff" stroke="#000" />
              <text v-if="p[0]" :x="p[1] + 2.500" :y="p[2] + 10" :textLength="p[3] - 4">{{ p[0] }}</text>
            </g>
            <text v-for="(t, i) in labels" :key="i" :x="t[1]" :y="t[2]" :textLength="t[3]">{{ t[0] }}</text>
          </svg>
          <div class="vs"><i class="ab"><svg width="7" height="4"><path d="M0 4h7L3.500 0z" /></svg></i><s class="g1"></s><i class="th"></i><s></s><i class="ab"><svg width="7" height="4"><path d="M0 0h7L3.500 4z" /></svg></i></div>
        </div>
        <div class="alarms">
          <div class="alist">
            <div class="ah"><div v-for="c in cols" :key="c[0]" :style="{ width: c[1] + 'px' }"><span v-fit="c[2]">{{ c[0] }}</span></div><div class="rest"></div></div>
            <div v-for="r in 5" :key="r" class="ar">
              <div v-for="c in cols" :key="c[0]" :style="{ width: c[1] + 'px' }"><span v-if="r === 1" v-fit="c[4]" :style="{ marginLeft: c[5] + 'px' }">{{ c[3] }}</span></div>
            </div>
          </div>
        </div>
      </div>
    </main>

    <footer class="status">
      <span v-fit="88">For Help, press F1</span>
      <div class="sp a"><span v-fit="108">Assigned to: CTRL-SI1</span></div><div class="sp b"></div><div class="sp c"><span v-fit="22">NUM</span></div><div class="sp d"></div>
    </footer>
    <footer class="task">
      <div class="start"><Ico n="flag" /><b v-fit="29">Start</b></div>
      <s class="grip g1"></s>
      <div class="quick"><Ico v-for="n in quick" :key="n" :n="n" /></div>
      <s class="grip g2"></s>
      <div v-for="t in tasks" :key="t[1]" class="tb" :class="{ on: t[3] }"><Ico :n="t[0]" /><span v-fit="t[2]">{{ t[1] }}</span></div>
      <div class="tray"><Ico v-for="(n, i) in tray" :key="i" :n="n" /><span v-fit="39">3:18 PM</span></div>
    </footer>
  </div>
</template>

<style>
body { margin: 0; overflow: hidden; background: #d4d0c8; }
</style>

<style scoped>
* { box-sizing: border-box; }
.screen { width: 1280px; height: 1024px; display: flex; flex-direction: column; background: #d4d0c8; color: #000; overflow: hidden; font: 11px/14px "DejaVu Sans Condensed", "DejaVu Sans", sans-serif; font-stretch: condensed; white-space: nowrap; cursor: default; }
span, b { display: inline-block; flex: none; }
s, i, em { display: block; text-decoration: none; font-style: normal; flex: none; }
svg { flex: none; display: block; }
.title { height: 18px; display: flex; align-items: center; padding-left: 2px; background: linear-gradient(90deg, #0a246a, #a6caf0); color: #fff; }
.title b { margin-left: 1px; font-size: 11.500px; }
.wbtns { margin-left: auto; display: flex; padding-right: 4px; }
.wb { width: 14px; height: 13px; background: #d4d0c8; border: 1px solid; border-color: #fff #404040 #404040 #fff; }
.wb.last { margin-left: 3px; }
.menu { height: 20px; display: flex; align-items: center; padding-top: 1px; }
.menu u { text-underline-offset: 2px; }
.bars { height: 96px; border-top: 1px solid #808080; }
.bar { display: flex; align-items: center; padding-left: 5px; border-top: 1px solid #fff; border-bottom: 1px solid #808080; }
.bar1 { height: 32px; width: 521px; box-shadow: 0 1px #fff; }
.bar2 { height: 32px; width: 245px; }
.bar3 { height: 31px; width: 245px; border-bottom: 0; }
.cell { width: 23px; height: 22px; display: flex; align-items: center; justify-content: center; margin-top: -3px; }
.bar2 .cell { margin-top: -3px; }
.bar3 .cell { margin-top: -3px; }
.cell.on { border: 1px solid; border-color: #808080 #fff #fff #808080; background: conic-gradient(#fff 25%, #d4d0c8 0 50%, #fff 0 75%, #d4d0c8 0) 0 0/2px 2px; }
.edge { width: 2px; align-self: stretch; border-left: 1px solid #808080; border-right: 1px solid #fff; }
.sep { width: 2px; height: 17px; border-left: 1px solid #808080; border-right: 1px solid #fff; margin-top: -2px; }
.e1 { margin-left: 11px; }
.combo { width: 59px; height: 22px; margin: -2px 0 0 6px; display: flex; align-items: center; background: #fff; border: 1px solid; border-color: #808080 #fff #fff #808080; box-shadow: inset 1px 1px #404040; padding: 2px 2px 1px 5px; }
.combo b { font: bold 12px "Liberation Sans", sans-serif; }
.combo em { margin-left: auto; width: 15px; height: 17px; display: flex; align-items: center; justify-content: center; background: #d4d0c8; border: 1px solid; border-color: #fff #404040 #404040 #fff; box-shadow: inset -1px -1px #808080; }
.s1 { margin-right: 4px; margin-left: 6px; }
.s2 { margin-right: 3px; margin-left: 4px; }
.s3 { margin-right: 2px; margin-left: 3px; }
.e2 { margin: 0 6px 0 14px; }
.s4 { margin-right: 3px; margin-left: 3px; }
.e3 { margin-left: 10px; }
.e4 { margin-left: 10px; }
.s5 { margin-right: 2px; margin-left: 5px; }
.s6 { margin-right: 2px; margin-left: 4px; }
.e5 { margin-left: auto; }
.work { height: 842px; display: flex; border-top: 1px solid #808080; }
.left { width: 252px; display: flex; flex-direction: column; border-top: 1px solid #fff; border-right: 1px solid #fff; }
.upper { height: 418px; padding: 4px 0 0 5px; display: flex; gap: 4px; border-bottom: 1px solid #fff; }
.sunk { height: 407px; background: #fff; border: 1px solid; border-color: #404040 #d4d0c8 #d4d0c8 #404040; box-shadow: inset 1px 1px #808080, 1px 1px #fff; overflow: hidden; }
.tree { width: 92px; display: flex; flex-direction: column; }
.node { display: flex; align-items: center; height: 17px; }
.root { padding-left: 7px; }
.root .ico { margin: 0 4px 0 6px; }
.sel { background: #d4d0c8; height: 17px; padding-top: 2px; }
.child { padding-left: 30px; }
.child span { margin-left: 4px; }
.fill { flex: 1; }
.hs { display: flex; height: 16px; margin: 0 0 1px 1px; background: conic-gradient(#fff 25%, #d4d0c8 0 50%, #fff 0 75%, #d4d0c8 0) 0 0/2px 2px; }
.hs s { flex: 1; }
.ab, .th { background: #d4d0c8; border: 1px solid; border-color: #d4d0c8 #404040 #404040 #d4d0c8; box-shadow: inset 1px 1px #fff, inset -1px -1px #808080; }
.ab { width: 16px; height: 16px; display: flex; align-items: center; justify-content: center; }
.t1 { width: 49px; }
.t2 { width: 60px; }
.blist { width: 143px; padding: 2px 0 0 1px; }
.brow { height: 17px; display: flex; align-items: center; gap: 1px; }
.lower { flex: 1; margin: 4px 0 0; border-top: 1px solid #000; padding: 6px 7px 7px 5px; display: flex; flex-direction: column; }
.filter { height: 26px; width: 239px; display: flex; align-items: center; padding: 5px 0 0 7px; border: 1px solid; border-color: #606060 #fff transparent #808080; border-bottom: 0; font-family: "Liberation Sans", sans-serif; }
.flab { margin-right: 6px; }
.cb { width: 12px; height: 12px; margin-right: 3px; background: #fff; border: 1px solid; border-color: #404040 #fff #fff #404040; display: flex; align-items: center; justify-content: center; }
.cb.far { margin-left: 6px; }
.tabs { display: flex; align-items: flex-end; height: 22px; width: 239px; padding-left: 1px; border-left: 1px solid #808080; border-right: 1px solid #fff; font-family: "Liberation Sans", sans-serif; }
.tab { height: 19px; padding: 2px 5px 0 3px; border: 1px solid; border-color: #fff #404040 transparent #fff; border-bottom: 0; border-radius: 2px 2px 0 0; box-shadow: inset -1px 0 #808080; width: 69px; }
.tab.act { height: 22px; width: 66px; padding: 3px 5px 0 6px; }
.page { height: 358px; width: 239px; border: solid; border-width: 0 1px 1px 1px; border-color: #fff #fff #fff #808080; padding: 0 1px 1px 1px; }
.plist { height: 356px; border: 1px solid; border-color: #fff #404040 #404040 #fff; box-shadow: inset -1px -1px #808080; padding: 4px 5px 4px 3px; font-family: "Liberation Sans", sans-serif; display: flex; flex-direction: column; }
.ph { height: 18px; flex: none; display: flex; border-top: 1px solid #606060; border-left: 1px solid #404040; border-right: 1px solid #fff; overflow: hidden; }
.ph div { background: #d4d0c8; height: 17px; padding: 2px 0 0 5px; border-bottom: 1px solid #808080; border-right: 1px solid #808080; box-shadow: inset 1px 1px #fff; overflow: hidden; }
.p1 { width: 100px; flex: none; }
.p2 { width: 80px; flex: none; }
.p3 { flex: 1; border-right: 0 !important; }
.prows { flex: 1 1 0; min-height: 0; overflow: hidden; background: #fff; border-left: 1px solid #404040; border-right: 1px solid #d4d0c8; }
.pr { display: flex; height: 17px; border-bottom: 1px solid #c8c8c8; }
.pr > div { border-right: 1px solid #c8c8c8; padding: 2px 0 0 5px; display: flex; overflow: hidden; }
.pr > .p1 { width: 101px; padding-left: 21px; }
.pr > .p2 { padding-left: 4px; }
.pr > .p3 { padding-left: 4px; }
.bell { margin: -2px 1px 0 -17px; }
.plist .hs { flex: none; margin-bottom: 0; border-right: 1px solid #fff; }
.right { flex: 1; display: flex; flex-direction: column; border-left: 1px solid #404040; margin-left: 4px; box-shadow: inset 1px 0 #808080; min-width: 0; }
.view { height: 727px; display: flex; border-top: 1px solid #404040; border-bottom: 2px solid #fff; padding-left: 1px; box-shadow: inset 1px 0 #404040; }
.canvas { background: #fff; width: 1002px; height: 723px; }
.canvas text { font: 11px "Liberation Sans", sans-serif; }
.canvas text.pin { font-size: 8px; stroke: #000; stroke-width: .25px; }
.vs { width: 17px; margin-left: 1px; height: 723px; display: flex; flex-direction: column; background: conic-gradient(#fff 25%, #d4d0c8 0 50%, #fff 0 75%, #d4d0c8 0) 0 0/2px 2px; }
.vs .ab { width: 17px; }
.vs .g1 { flex: none; height: 206px; }
.vs s { flex: 1; }
.vs .th { height: 17px; }
.alarms { flex: 1; margin-top: 4px; border-top: 1px solid #000; padding: 7px 4px 5px 9px; background: #d4d0c8; }
.alist { height: 98px; background: #fff; border: 1px solid; border-color: #404040 #d4d0c8 #d4d0c8 #606060; box-shadow: 1px 1px #fff; overflow: hidden; font-family: "Liberation Sans", sans-serif; }
.ah { display: flex; }
.ah div { height: 18px; flex: none; background: #d4d0c8; border-bottom: 1px solid #808080; border-right: 1px solid #808080; padding: 3px 0 0 5px; box-shadow: inset 1px 1px #fff; }
.ah .rest { flex: 1; }
.ar { display: flex; height: 17px; border-bottom: 1px solid #c8c8c8; padding-left: 1px; }
.ar div { flex: none; border-right: 1px solid #c8c8c8; padding-top: 2px; height: 16px; }
.status { height: 21px; display: flex; align-items: center; border-top: 1px solid #808080; box-shadow: inset 0 1px #fff; padding: 2px 0 0 1px; }
.sp { height: 16px; border: 1px solid; border-color: #808080 #fff #fff #808080; padding-left: 1px; line-height: 14px; }
.a { margin-left: auto; width: 226px; }
.b { width: 26px; margin-left: 2px; }
.c { width: 28px; margin-left: 2px; }
.d { width: 31px; margin-left: 2px; }
.task { height: 27px; display: flex; align-items: center; border-top: 1px solid #fff; padding: 0 2px; }
.start, .tb { height: 22px; display: flex; align-items: center; border: 1px solid; border-color: #fff #404040 #404040 #fff; box-shadow: inset -1px -1px #808080; }
.start { width: 52px; padding-left: 1px; gap: 1px; font-size: 11.500px; }
.grip { width: 3px; height: 18px; border: 1px solid; border-color: #fff #808080 #808080 #fff; }
.grip.g1 { margin-left: 7px; }
.quick { display: flex; gap: 7px; margin-left: 7px; }
.grip.g2 { margin: 0 4px 0 20px; }
.tb { width: 160px; margin-right: 3px; padding-left: 3px; gap: 3px; }
.tb.on { font-weight: bold; border-color: #404040 #fff #fff #404040; box-shadow: inset 1px 1px #808080; background: conic-gradient(#fff 25%, #d4d0c8 0 50%, #fff 0 75%, #d4d0c8 0) 0 0/2px 2px; }
.tray { margin-left: auto; width: 224px; height: 22px; display: flex; align-items: center; gap: 2px; padding: 0 2px; border: 1px solid; border-color: #808080 #fff #fff #808080; }
.tray span { margin-left: 8px; }
</style>
